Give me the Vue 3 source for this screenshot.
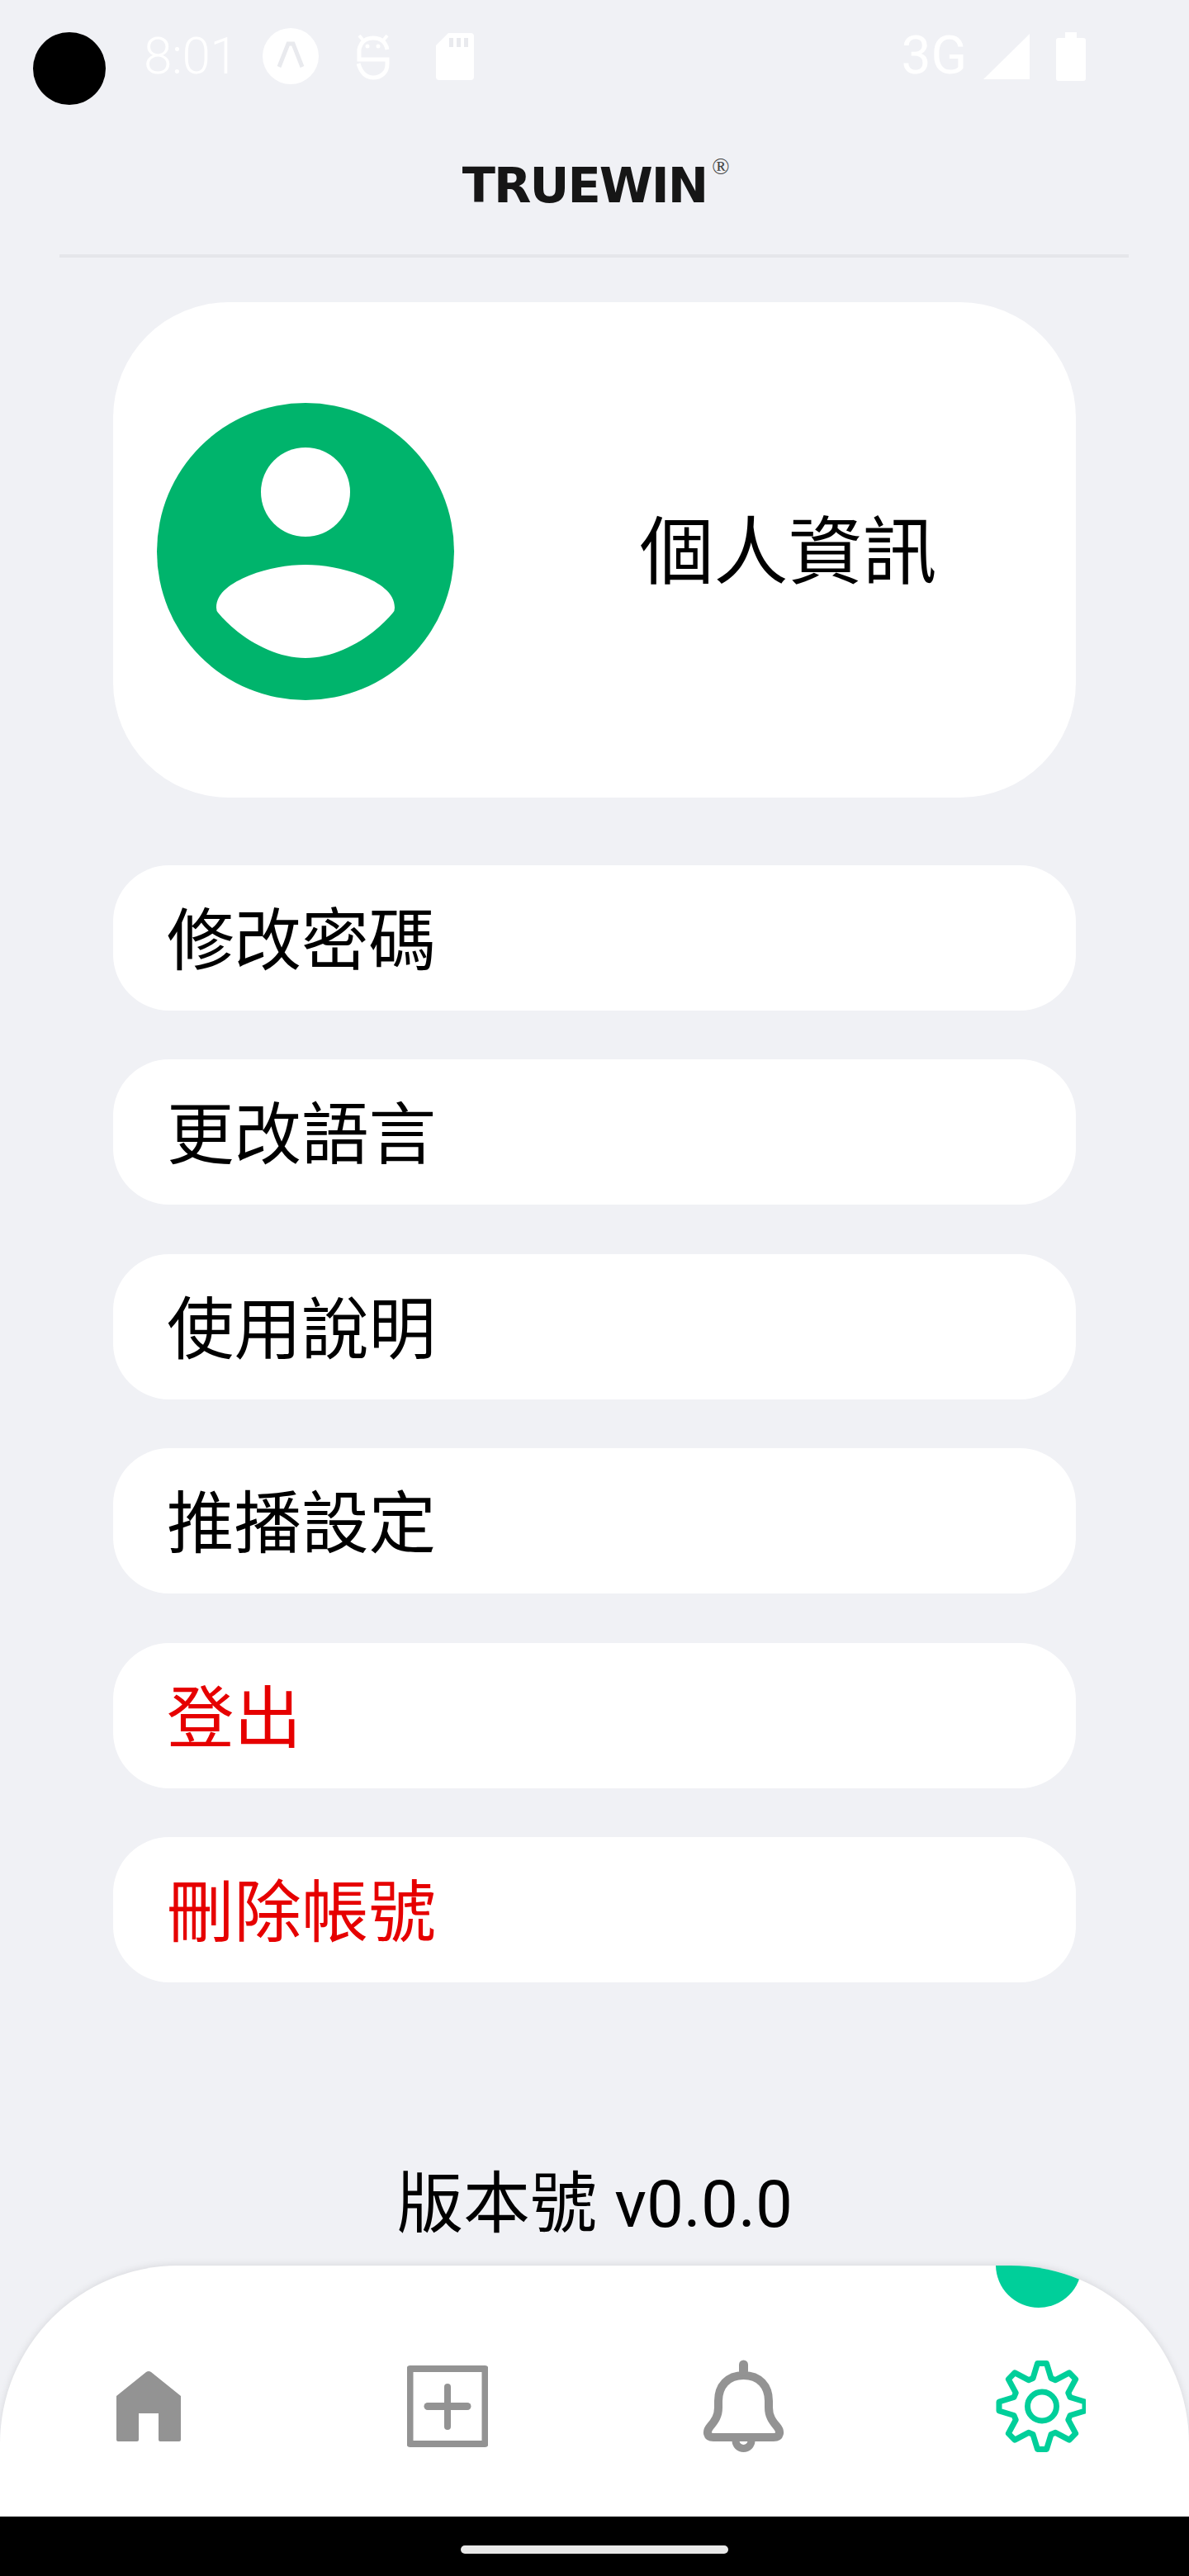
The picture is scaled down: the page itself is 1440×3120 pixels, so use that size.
<script setup>
// settings page of the app
const menuItems = [
  { label: '修改密碼' },
  { label: '更改語言' },
  { label: '使用說明' },
  { label: '推播設定' },
  { label: '登出', danger: true },
  { label: '刪除帳號', danger: true },
]

// 8 teeth, one tooth is rotated round the centre
const tooth = [[-11, -34], [-5.5, -52], [5.5, -52], [11, -34]]
const gearPath = () => {
  const points = []
  for (let i = 0; i < 8; i++) {
    const a = (i * Math.PI) / 4
    for (const [x, y] of tooth) {
      const px = x * Math.cos(a) - y * Math.sin(a)
      const py = x * Math.sin(a) + y * Math.cos(a)
      points.push(px.toFixed(1) + ' ' + py.toFixed(1))
    }
  }
  return 'M' + points.join('L') + 'Z'
}
</script>

<template>
  <div class="page">
    <div class="camera"></div>

    <div class="status">
      <div class="status-left">
        <span class="time">8:01</span>
        <svg class="st-a" width="68" height="68" viewBox="0 0 68 68">
          <circle cx="34" cy="34" r="34" fill="#fff" />
          <path d="M20 47L31 19H37L48 47" fill="none" stroke="#e9eaee" stroke-width="5" />
        </svg>
        <svg class="st-bug" width="42" height="57" viewBox="0 0 42 57">
          <g fill="none" stroke="#fff" stroke-width="5">
            <path d="M38 20C36 10 29 6 21 6C13 6 6 10 4 20V32H38V38C38 48 30 54 21 54C12 54 6 47 3 37" />
            <path d="M4 3L9 9M38 3L33 9" stroke-width="4" />
          </g>
          <circle cx="14" cy="16" r="2.5" fill="#fff" />
          <circle cx="27" cy="16" r="2.5" fill="#fff" />
        </svg>
        <svg class="st-sd" width="46" height="57" viewBox="0 0 46 57">
          <path d="M15 0H42Q46 0 46 4V53Q46 57 42 57H4Q0 57 0 53V15Z" fill="#fff" />
          <path d="M16 6h5v11h-5zM25 6h5v11h-5zM34 6h5v11h-5z" fill="#e9eaee" />
        </svg>
      </div>
      <div class="status-right">
        <span class="net">3G</span>
        <svg class="st-signal" width="56" height="55" viewBox="0 0 56 55">
          <path d="M56 0V55H0Z" fill="#fff" />
        </svg>
        <svg class="st-battery" width="36" height="59" viewBox="0 0 36 59">
          <path d="M11 0H25V7H33Q36 7 36 10V56Q36 59 33 59H3Q0 59 0 56V10Q0 7 3 7H11Z" fill="#fff" />
        </svg>
      </div>
    </div>

    <header class="header">
      <span class="logo">TRUEWIN<sup class="reg">®</sup></span>
    </header>
    <div class="divider"></div>

    <main class="content">
      <section class="card">
        <svg class="avatar" width="360" height="360" viewBox="0 0 360 360">
          <circle cx="180" cy="180" r="180" fill="#00b46c" />
          <circle cx="180" cy="108" r="54" fill="#fff" />
          <path
            d="M72 248C72 230 90 218 112 209C135 200 158 196 180 196C202 196 225 200 248 209C270 218 288 230 288 248Q288 252 286 254C262 283 220 309 180 309C140 309 98 283 74 254Q72 252 72 248Z"
            fill="#fff"
          />
        </svg>
        <div class="card-title">個人資訊</div>
      </section>

      <ul class="menu">
        <li v-for="item in menuItems" :key="item.label" class="menu-row" :class="{ danger: item.danger }">
          {{ item.label }}
        </li>
      </ul>

      <div class="version">版本號 <span class="version-num">v0.0.0</span></div>
    </main>

    <nav class="tabbar">
      <div class="tab-dot"></div>
      <div class="tab">
        <svg width="78" height="85" viewBox="0 0 78 85">
          <path
            d="M78 30V83Q78 85 76 85H53Q51 85 51 83V51H27V83Q27 85 25 85H2Q0 85 0 83V30L36 1Q39 -1 42 1Z"
            fill="#939393"
          />
        </svg>
      </div>
      <div class="tab">
        <svg class="tab-add" width="98" height="99" viewBox="0 0 98 99">
          <rect x="3.5" y="4" width="91" height="91" fill="none" stroke="#939393" stroke-width="8" stroke-linejoin="round" />
          <path d="M25 49.5H73" stroke="#939393" stroke-width="9" stroke-linecap="round" />
          <path d="M49 26V74" stroke="#939393" stroke-width="8" stroke-linecap="round" />
        </svg>
      </div>
      <div class="tab">
        <svg width="99" height="113" viewBox="0 0 99 113">
          <g fill="none" stroke="#939393">
            <path
              d="M49.5 19C30 19 19 32 19 50V58C19 68 15 74 9 81C4 87 5 94 13 94H86C94 94 95 87 90 81C84 74 80 68 80 58V50C80 32 69 19 49.5 19Z"
              stroke-width="10"
            />
            <path d="M49.5 6V14" stroke-width="11" stroke-linecap="round" />
            <path d="M40 98a9.5 9.5 0 0 0 19 0" stroke-width="9" />
          </g>
        </svg>
      </div>
      <div class="tab">
        <svg width="109" height="113" viewBox="-56 -56.5 109 113">
          <path :d="gearPath()" fill="none" stroke="#00cf9a" stroke-width="7" stroke-linejoin="round" />
          <circle cx="0" cy="0" r="17.5" fill="none" stroke="#00cf9a" stroke-width="7" />
        </svg>
      </div>
    </nav>

    <div class="navbar">
      <div class="home-pill"></div>
    </div>
  </div>
</template>

<style scoped>
.page {
  position: relative;
  display: flex;
  flex-direction: column;
  width: 1440px;
  height: 3120px;
  background: #f0f1f5;
  overflow: hidden;
  font-family: "Noto Sans CJK TC", "Noto Sans", sans-serif;
  color: #000;
}

.camera {
  position: absolute;
  left: 40px;
  top: 39px;
  width: 88px;
  height: 88px;
  border-radius: 50%;
  background: #000;
}

.status {
  display: flex;
  justify-content: space-between;
  align-items: center;
  height: 136px;
  padding: 0 125px 0 174px;
  color: #fff;
  font-family: Roboto, sans-serif;
}

.status-left,
.status-right {
  display: flex;
  align-items: center;
}

.time {
  font-size: 62px;
  font-weight: 300;
  line-height: 70px;
  letter-spacing: -0.5px;
}

.st-a {
  margin-left: 30px;
}

.st-bug {
  margin-left: 45px;
}

.st-sd {
  margin-left: 55px;
}

.net {
  font-size: 64px;
  line-height: 70px;
  margin-right: 20px;
}

.st-battery {
  margin-left: 32px;
}

.header {
  display: flex;
  justify-content: center;
  align-items: center;
  height: 172px;
  padding: 6px 24px 0 0;
  box-sizing: border-box;
}

.logo {
  position: relative;
  font-family: "DejaVu Sans", sans-serif;
  font-size: 59px;
  font-weight: 700;
  letter-spacing: -2px;
  line-height: 70px;
  color: #161616;
}

.reg {
  position: absolute;
  left: 100%;
  top: -8px;
  margin-left: 6px;
  font-family: "Liberation Serif", serif;
  font-size: 28px;
  font-weight: 400;
  line-height: 40px;
  letter-spacing: 0;
  color: #444;
}

.divider {
  height: 4px;
  margin: 0 73px 0 72px;
  background: #e5e6ea;
}

.content {
  display: flex;
  flex-direction: column;
  flex: 1;
  padding: 54px 137px 0;
}

.card {
  display: flex;
  align-items: center;
  height: 600px;
  padding-left: 53px;
  border-radius: 140px;
  background: #fff;
}

.avatar {
  flex: none;
  margin-top: 4px;
}

.card-title {
  flex: 1;
  padding-left: 56px;
  margin-bottom: 10px;
  text-align: center;
  font-size: 90px;
  line-height: 120px;
}

.menu {
  display: flex;
  flex-direction: column;
  gap: 59.4px;
  list-style: none;
  margin: 82px 0 0;
  padding: 0;
}

.menu-row {
  height: 176px;
  padding-left: 65px;
  border-radius: 68px;
  background: #fff;
  font-size: 81.5px;
  line-height: 168px;
}

.danger {
  color: #e60000;
}

.version {
  margin-top: 211px;
  text-align: center;
  font-size: 81px;
  line-height: 100px;
  word-spacing: 3px;
}

.version-num {
  font-family: Roboto, sans-serif;
  font-size: 80px;
}

.tabbar {
  position: relative;
  display: grid;
  grid-template-columns: repeat(4, 1fr);
  align-items: center;
  height: 304px;
  padding-top: 36px;
  box-sizing: border-box;
  border-radius: 216px 216px 0 0;
  background: #fff;
  box-shadow: 0 -1px 10px rgba(0, 0, 0, 0.1);
  overflow: hidden;
}

.tab-dot {
  position: absolute;
  left: 1206px;
  top: -53px;
  width: 104px;
  height: 104px;
  border-radius: 50%;
  background: #00cf9a;
}

.tab {
  display: flex;
  justify-content: center;
}

.tab-add {
  margin-left: 4px;
}

.navbar {
  display: flex;
  justify-content: center;
  height: 72px;
  padding-top: 35px;
  box-sizing: border-box;
  background: #000;
}

.home-pill {
  width: 324px;
  height: 10px;
  border-radius: 5px;
  background: #e8e8e8;
}
</style>

<style>
html,
body {
  margin: 0;
  background: #f0f1f5;
}
</style>
